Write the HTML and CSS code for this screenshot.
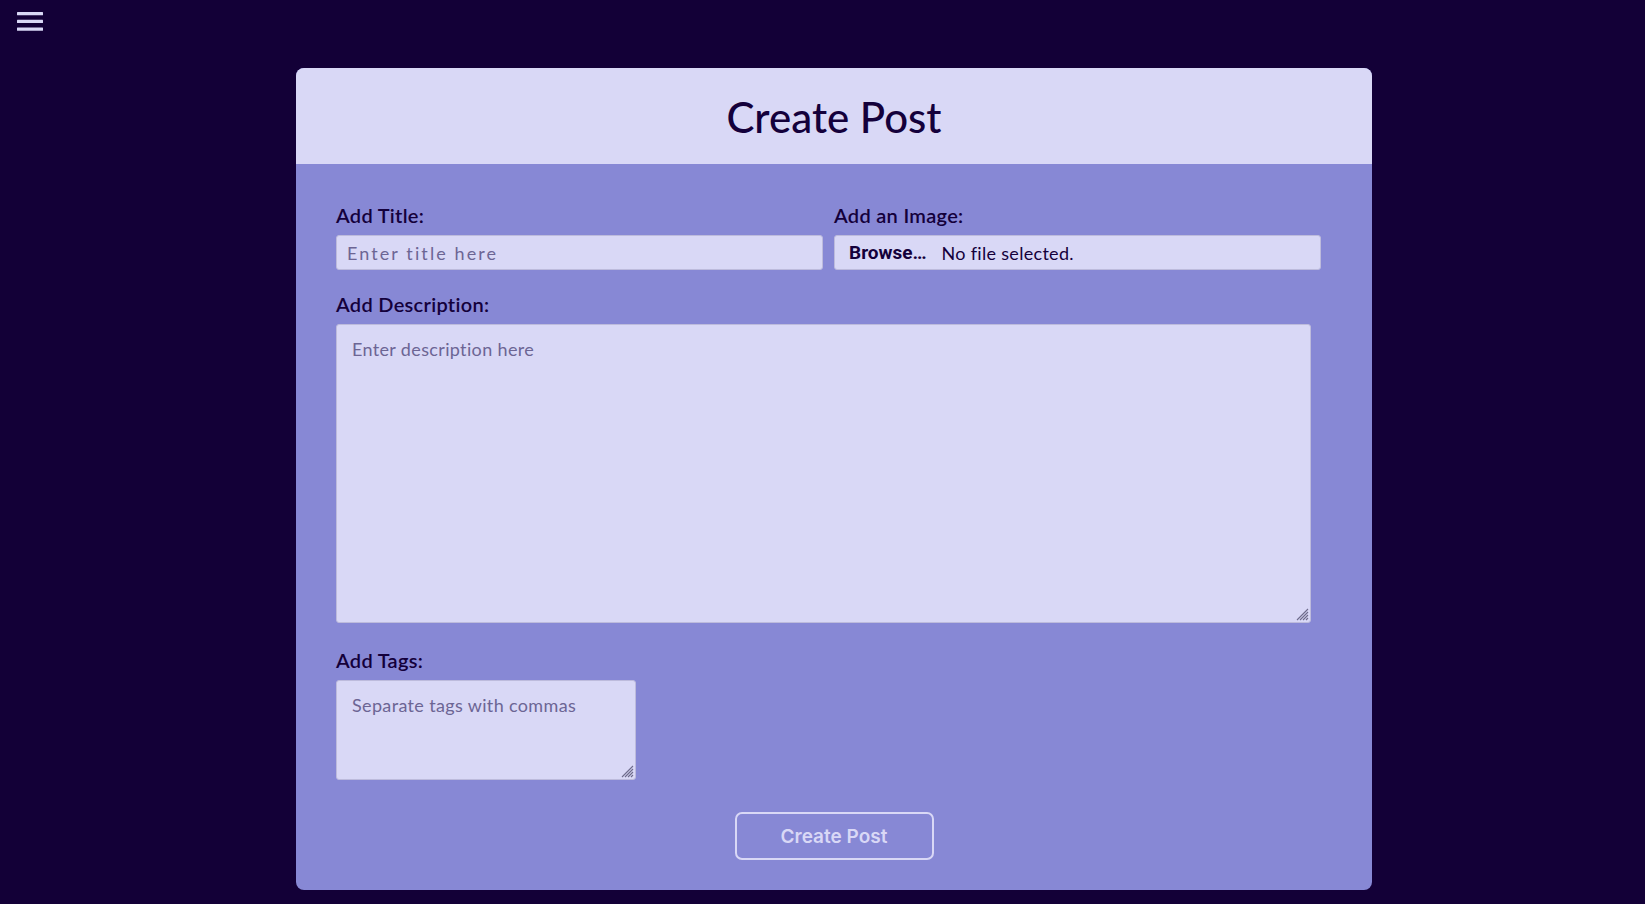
FILE: index.html
```html
<!DOCTYPE html>
<html lang="en">
<head>
<meta charset="utf-8">
<title>Create Post</title>
<link rel="stylesheet" href="styles.css">
</head>
<body>
  <button class="menu-btn" aria-label="Menu">
    <svg width="26" height="19" viewBox="0 0 26 19">
      <rect x="0" y="0" width="26" height="3.3" rx="0.5" fill="#d9d8f6"/>
      <rect x="0" y="7.7" width="26" height="3.3" rx="0.5" fill="#d9d8f6"/>
      <rect x="0" y="15.4" width="26" height="3.3" rx="0.5" fill="#d9d8f6"/>
    </svg>
  </button>
  <main class="main">
    <section class="card">
      <header class="card-head">
        <h1 class="card-title">Create Post</h1>
      </header>
      <form class="card-body">
        <div class="row">
          <div class="field">
            <label class="label" for="title">Add Title:</label>
            <input class="text-input" id="title" type="text" placeholder="Enter title here">
          </div>
          <div class="field">
            <span class="label">Add an Image:</span>
            <div class="file-input">
              <span class="file-btn">Browse…</span>
              <span class="file-name">No file selected.</span>
            </div>
          </div>
        </div>
        <div class="field field-gap">
          <label class="label" for="desc">Add Description:</label>
          <div class="area-wrap">
            <textarea class="area area-desc" id="desc" placeholder="Enter description here"></textarea>
            <svg class="grip" width="13" height="13" viewBox="0 0 13 13">
              <path d="M1 12 L12 1 M4 12 L12 4 M7 12 L12 7 M10 12 L12 10" stroke="#6e6b8c" stroke-width="1.1" fill="none"/>
            </svg>
          </div>
        </div>
        <div class="field field-gap2">
          <label class="label" for="tags">Add Tags:</label>
          <div class="area-wrap">
            <textarea class="area area-tags" id="tags" placeholder="Separate tags with commas"></textarea>
            <svg class="grip" width="13" height="13" viewBox="0 0 13 13">
              <path d="M1 12 L12 1 M4 12 L12 4 M7 12 L12 7 M10 12 L12 10" stroke="#6e6b8c" stroke-width="1.1" fill="none"/>
            </svg>
          </div>
        </div>
        <div class="actions">
          <button type="button" class="submit">Create Post</button>
        </div>
      </form>
    </section>
  </main>
</body>
</html>
```

FILE: styles.css
```css
* { box-sizing: border-box; }

html, body {
  margin: 0;
  padding: 0;
  background: #130037;
  height: 100%;
}

body {
  font-family: "Lato", "Noto Sans", sans-serif;
  color: #14003b;
}

.menu-btn {
  position: fixed;
  top: 12px;
  left: 17px;
  padding: 0;
  border: 0;
  background: none;
  line-height: 0;
  cursor: pointer;
}

.main {
  display: flex;
  justify-content: center;
  padding-left: 23px;
  padding-top: 68px;
}

.card {
  width: 1076px;
  border-radius: 8px;
  overflow: hidden;
  background: #8788d5;
}

.card-head {
  height: 96px;
  background: #d9d8f6;
  display: flex;
  align-items: center;
  justify-content: center;
}

.card-title {
  margin: 0;
  font-size: 42px;
  font-weight: 500;
  color: #14003b;
  line-height: 1;
  padding-top: 2px;
}

.card-body {
  padding: 38px 40px 30px 40px;
}

.row {
  display: grid;
  grid-template-columns: 487px 487px;
  column-gap: 11px;
}

.field {
  display: flex;
  flex-direction: column;
  align-items: flex-start;
}

.field-gap { margin-top: 21px; }
.field-gap2 { margin-top: 24px; }

.label {
  font-size: 20px;
  line-height: 26px;
  font-weight: 600;
  letter-spacing: 0.3px;
  color: #14003b;
  margin-bottom: 7px;
}

.text-input {
  width: 487px;
  height: 35px;
  border: 1px solid #bdbbdc;
  border-radius: 3px;
  background: #d9d8f6;
  padding: 0 10px;
  font-family: "Lato", sans-serif;
  font-size: 18px;
  letter-spacing: 2.1px;
  color: #14003b;
  outline: none;
}

.text-input::placeholder,
.area::placeholder {
  color: #6c6594;
}

.file-input {
  width: 487px;
  height: 35px;
  border: 1px solid #bdbbdc;
  border-radius: 3px;
  background: #d9d8f6;
  display: flex;
  align-items: center;
  padding-left: 14px;
}

.file-btn {
  font-family: "Roboto", sans-serif;
  font-weight: 700;
  font-size: 19px;
  color: #14003b;
  margin-right: 15px;
}

.file-name {
  font-size: 18px;
  letter-spacing: 0.3px;
  color: #14003b;
}

.area-wrap {
  position: relative;
  line-height: 0;
}

.area {
  display: block;
  border: 1px solid #bdbbdc;
  border-radius: 3px;
  background: #d9d8f6;
  padding: 12px 15px;
  font-family: "Lato", sans-serif;
  font-size: 18px;
  letter-spacing: 0.35px;
  line-height: 24px;
  color: #14003b;
  outline: none;
  resize: none;
}

.grip {
  position: absolute;
  right: 2px;
  bottom: 2px;
  pointer-events: none;
}

.area-desc {
  width: 975px;
  height: 299px;
}

.area-tags {
  width: 300px;
  height: 100px;
}

.actions {
  display: flex;
  justify-content: center;
  margin-top: 32px;
}

.submit {
  width: 199px;
  height: 48px;
  border: 2px solid #d9d8f6;
  border-radius: 7px;
  background: transparent;
  color: #d9d8f6;
  font-family: "Inter", sans-serif;
  font-weight: 600;
  font-size: 19px;
  cursor: pointer;
}
```
